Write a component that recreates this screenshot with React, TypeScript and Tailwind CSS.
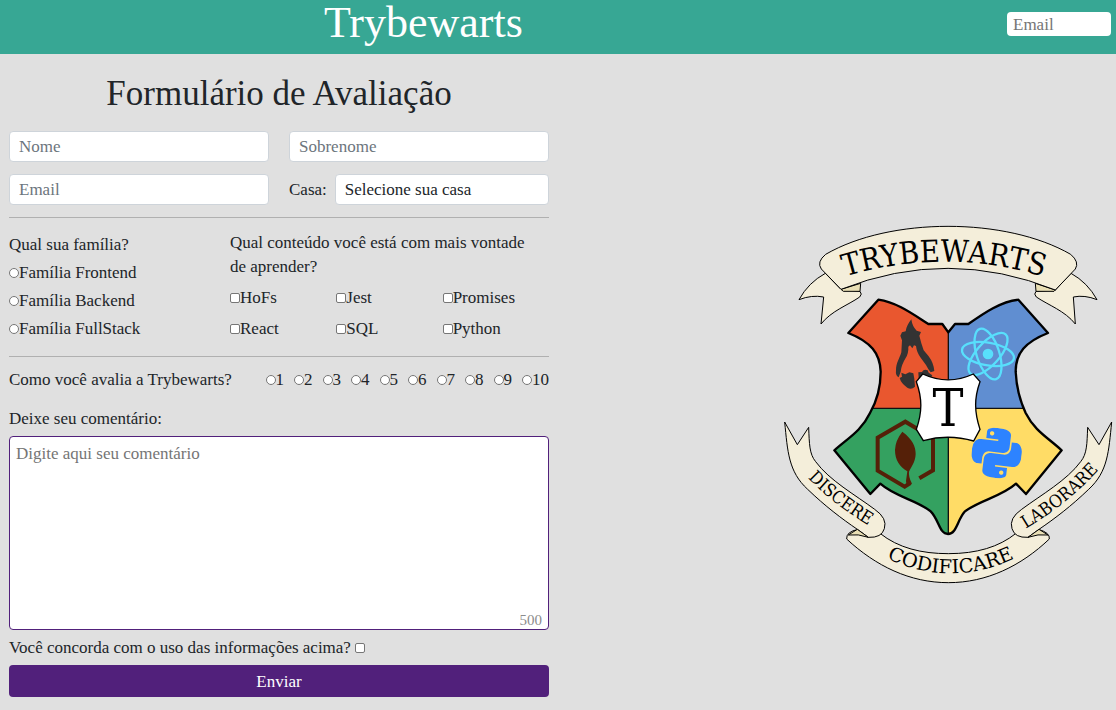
import React, { useState } from "react";
import { SiPython } from "react-icons/si";

const families = ["Frontend", "Backend", "FullStack"];
const subjects = ["HoFs", "Jest", "Promises", "React", "SQL", "Python"];
const rates = [1, 2, 3, 4, 5, 6, 7, 8, 9, 10];

const fieldClass =
  "h-[31px] w-full min-w-0 rounded border border-[#ced4da] bg-white px-[9px] text-[#212529] placeholder:text-[#6c757d]";
const radioClass = "h-[10px] w-[10px] shrink-0 appearance-none rounded-full border border-[#767676] bg-white checked:bg-[#51207b]";
const checkClass = "h-[10px] w-[10px] shrink-0 appearance-none rounded-[2px] border border-[#767676] bg-white checked:bg-[#51207b]";

const shield =
  "M295 254C350 262 395 295 445 327H487L505 352L525 327H565C615 292 662 260 715 254L804 354C735 381 707 415 707 470C709 515 718 553 737 594C764 648 804 668 845 706L738 837L708 806C665 845 600 855 555 889C532 914 530 957 504 957C478 957 477 914 452 889C410 855 344 845 301 806L271 837L163 706C206 668 244 648 270 594C293 553 302 515 302 470C300 415 273 381 205 354Z";

function Crest() {
  return (
    <svg viewBox="0 0 1008 1125" className="h-auto w-[336px] max-w-full" role="img" aria-label="Trybewarts">
      <defs>
        <clipPath id="shield-clip">
          <path d={shield} />
        </clipPath>
        <path id="arc-name" d="M160 196Q492 84 824 196" />
        <path id="arc-discere" d="M80 785Q155 865 270 934" />
        <path id="arc-laborare" d="M738 941Q865 865 956 765" />
        <path id="arc-codificare" d="M308 1024Q512 1126 716 1024" />
      </defs>

      <g stroke="#000" strokeWidth="3" strokeLinejoin="round" fill="#f4eeda">
        <path d="M136 175Q85 203 57 254Q95 239 131 246L123 327C155 287 203 271 239 246Q248 237 240 229L183 223Z" />
        <path d="M873 175Q923 203 951 254Q914 239 880 246L886 327C854 287 806 271 769 246Q760 237 768 229L826 225Z" />
        <path d="M183 223L242 205L240 229H190Z" fill="#e9dfb4" />
        <path d="M826 225L766 205L768 229H822Z" fill="#e9dfb4" />
        <path d="M183 223L124 162Q109 141 137 118C330 6 678 6 872 118Q899 141 886 162L826 225Q504 96 183 223Z" />
      </g>
      <text fontSize="92" fontFamily="'DejaVu Serif Condensed', 'DejaVu Serif', serif" textAnchor="middle">
        <textPath href="#arc-name" startOffset="50%">TRYBEWARTS</textPath>
      </text>

      <g clipPath="url(#shield-clip)">
        <path fill="#e9572f" d="M150 240H505V580H150Z" />
        <path fill="#608ed1" d="M505 240H860V580H505Z" />
        <path fill="#34a160" d="M150 580H505V970H150Z" />
        <path fill="#ffdc66" d="M505 580H860V970H505Z" />
        <path d="M150 580H860M505 350V970" stroke="#111" strokeWidth="4" />
      </g>
      <path d={shield} fill="none" stroke="#000" strokeWidth="7" strokeLinejoin="round" />

      <g fill="#333">
        <path d="M394 313Q397 335 410 347L423 351L418 362L424 385L431 406L446 424Q461 444 463 468L452 472Q445 464 438 450L422 428Q410 412 408 393L402 391L397 400L390 391L385 395Q386 415 377 429Q364 450 362 470L356 487Q346 482 348 465C348 444 358 432 364 412L366 376L361 362L366 352L377 349Q379 332 394 313Z" />
        <path d="M364 473L376 478L388 472L400 475L403 491L405 515Q394 525 382 518Q363 505 359 489L366 485Z" />
        <path d="M416 492L415 472L426 471Q432 460 443 466L446 473L457 481L450 492Z" />
      </g>

      <g fill="none" stroke="#58dffc" strokeWidth="7">
        <ellipse cx="624" cy="417" rx="79" ry="34" transform="rotate(10 624 417)" />
        <ellipse cx="624" cy="417" rx="79" ry="34" transform="rotate(72 624 417)" />
        <ellipse cx="624" cy="417" rx="79" ry="34" transform="rotate(132 624 417)" />
        <circle cx="624" cy="417" r="16" fill="#58dffc" stroke="none" />
      </g>

      <path d="M418 790L459 766V670L376 620L293 668V767L374 815L391 804" fill="none" stroke="#552008" strokeWidth="12" />
      <path d="M367 650C398 673 407 695 407 717C406 742 394 755 387 770Q385 785 396 806L380 813L378 798L382 769C359 756 345 735 345 705Q346 676 367 650Z" fill="#552008" />

      <g transform="rotate(7 650 714)">
        <SiPython x={575} y={639} size={150} color="#2d83ff" />
      </g>

      <path
        d="M428 477Q505 512 580 477L600 500C582 550 583 591 600 643L581 678Q505 656 430 677L409 643C427 591 427 550 409 500Z"
        fill="#fff"
        stroke="#000"
        strokeWidth="4"
      />
      <text x="504" y="632" fontSize="155" textAnchor="middle" fontFamily="'DejaVu Serif Condensed', 'DejaVu Serif', serif">
        T
      </text>

      <g stroke="#000" strokeWidth="3" strokeLinejoin="round" fill="#f4eeda">
        <path d="M235 943Q198 950 200 972C287 1053 390 1103 505 1103C620 1103 723 1053 808 972Q811 953 775 943L708 955C657 996 590 1016 505 1016C425 1016 355 999 300 955Z" />
        <path d="M14 621L52 689L86 637C88 687 88 717 107 740C148 796 226 840 284 883Q323 910 313 941Q305 969 265 967L232 943C185 911 135 873 83 823C25 770 23 709 14 621Z" />
        <path d="M995 621L957 689L923 637C921 687 921 717 902 740C861 796 783 840 725 883Q686 910 696 941Q704 969 744 967L777 943C824 911 874 873 926 823C984 770 986 709 995 621Z" />
        <path d="M232 943L205 960Q235 956 265 967Z" fill="#e9dfb4" />
        <path d="M777 943L804 960Q774 956 744 967Z" fill="#e9dfb4" />
      </g>
      <g fontFamily="'DejaVu Serif Condensed', 'DejaVu Serif', serif" fill="#000" textAnchor="middle">
        <text fontSize="53">
          <textPath href="#arc-discere" startOffset="50%">DISCERE</textPath>
        </text>
        <text fontSize="53">
          <textPath href="#arc-laborare" startOffset="50%">LABORARE</textPath>
        </text>
        <text fontSize="58" fontFamily="'DejaVu Serif', serif">
          <textPath href="#arc-codificare" startOffset="50%">CODIFICARE</textPath>
        </text>
      </g>
    </svg>
  );
}

export default function App() {
  const [comment, setComment] = useState("");

  return (
    <div className="min-h-screen bg-[#e0e0e0] font-['Liberation_Serif',serif] text-[17px] leading-6 text-[#212529]">
      <header className="flex h-[54px] items-center bg-[#37a794] pr-[5px]">
        <h1 className="flex-1 pb-2 pl-[324px] text-[44px] leading-[46px] font-medium text-white">Trybewarts</h1>
        <input
          type="email"
          aria-label="Email"
          placeholder="Email"
          className="mb-[6px] h-6 w-[104px] rounded bg-white px-[6px] pt-px text-[#212529] placeholder:text-[#757575]"
        />
      </header>

      <main className="grid grid-cols-2">
        <form className="px-[9px] pb-3" onSubmit={(e) => e.preventDefault()}>
          <h2 className="pt-[20px] pb-[17px] text-center text-[35px] leading-10">Formulário de Avaliação</h2>

          <div className="grid grid-cols-2 gap-x-5 gap-y-3">
            <input aria-label="Nome" placeholder="Nome" className={fieldClass} />
            <input aria-label="Sobrenome" placeholder="Sobrenome" className={fieldClass} />
            <input type="email" aria-label="Email" placeholder="Email" className={fieldClass} />
            <div className="flex items-center gap-2">
              <label htmlFor="house">Casa:</label>
              <select id="house" className="h-[31px] w-full min-w-0 appearance-none rounded border border-[#ced4da] bg-white px-[9px]">
                <option>Selecione sua casa</option>
                <option>Gitnória</option>
                <option>Reactpuff</option>
                <option>Corvinode</option>
                <option>Pytherina</option>
              </select>
            </div>
          </div>

          <hr className="mt-3 mb-[13px] border-[#b0b0b0]" />

          <div className="flex">
            <fieldset className="w-[221px] shrink-0">
              <legend className="leading-7">Qual sua família?</legend>
              {families.map((name) => (
                <label key={name} className="flex h-7 items-center">
                  <input type="radio" name="family" value={name} className={radioClass} />
                  Família {name}
                </label>
              ))}
            </fieldset>
            <fieldset className="flex-1">
              <legend className="pr-3">Qual conteúdo você está com mais vontade de aprender?</legend>
              <div className="grid grid-cols-3 pt-[3px]">
                {subjects.map((name) => (
                  <label key={name} className="flex h-[31px] items-center">
                    <input type="checkbox" name="subject" value={name} className={checkClass} />
                    {name}
                  </label>
                ))}
              </div>
            </fieldset>
          </div>

          <hr className="mt-3 mb-[11px] border-[#b0b0b0]" />

          <fieldset aria-labelledby="rate-label" className="flex items-center justify-between">
            <span id="rate-label">Como você avalia a Trybewarts?</span>
            <div className="flex gap-[10px]">
              {rates.map((rate) => (
                <label key={rate} className="flex items-center">
                  <input type="radio" name="rate" value={rate} className={radioClass} />
                  {rate}
                </label>
              ))}
            </div>
          </fieldset>

          <label htmlFor="comment" className="mt-[15px] mb-[5px] block">
            Deixe seu comentário:
          </label>
          <div className="relative">
            <textarea
              id="comment"
              maxLength={500}
              value={comment}
              onChange={(e) => setComment(e.target.value)}
              placeholder="Digite aqui seu comentário"
              className="block h-[194px] w-full resize-none rounded border border-[#51207b] bg-white px-[6px] py-[5px] placeholder:text-[#757575]"
            />
            <span className="absolute right-[7px] bottom-0 text-[15px] leading-5 text-[#8c8c8c]">{500 - comment.length}</span>
          </div>

          <label className="mt-[6px] mb-[5px] flex items-center gap-1">
            Você concorda com o uso das informações acima?
            <input type="checkbox" className={checkClass} />
          </label>
          <button type="submit" className="block h-8 w-full rounded bg-[#51207b] pt-px text-white">
            Enviar
          </button>
        </form>

        <div className="flex items-center justify-end pt-[42px]">
          <Crest />
        </div>
      </main>
    </div>
  );
}
